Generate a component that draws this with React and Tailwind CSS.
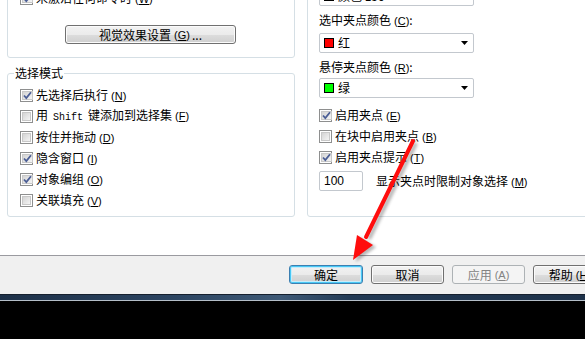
import React from "react";

// Win7 style checkbox
function Check({ checked }) {
  return (
    <span className="w-[13px] h-[13px] shrink-0 border border-[#8e8f8f] bg-white p-[1px] flex">
      <span className="flex-1 border border-[#c8c8c8] bg-[linear-gradient(135deg,#d4d4d4,#f4f4f4)] flex items-center justify-center">
        {checked && (
          <svg width="9" height="9" viewBox="0 0 9 9">
            <path d="M1 4.5 L3.3 7 L8 1.2" fill="none" stroke="#4b5e95" strokeWidth="1.8" />
          </svg>
        )}
      </span>
    </span>
  );
}

// mnemonic like (N)
function Mn({ k }) {
  return (
    <span className="ml-[3px] font-['Liberation_Sans',sans-serif] text-[11px]">
      (<u>{k}</u>)
    </span>
  );
}

function Row({ checked, children, k }) {
  return (
    <div className="h-[21px] flex items-center gap-[3px]">
      <Check checked={checked} />
      <span className="flex items-baseline whitespace-nowrap">
        {children}
        {k && <Mn k={k} />}
      </span>
    </div>
  );
}

function Combo({ color, label }) {
  return (
    <div className="w-[155px] h-[20px] border border-[#c3c8ce] rounded-[2px] bg-white flex items-center pl-[4px] pr-[4px]">
      <span className="w-[10px] h-[10px] border border-black" style={{ background: color }} />
      <span className="ml-[4px] flex-1">{label}</span>
      <svg width="8" height="5" viewBox="0 0 8 5">
        <path d="M0 0 H7 L3.5 4 Z" fill="#000" />
      </svg>
    </div>
  );
}

function Btn({ children, kind = "normal", className = "" }) {
  const styles = {
    normal:
      "border-[#707070] bg-[linear-gradient(#f2f2f2_0%,#ebebeb_50%,#dddddd_51%,#cfcfcf_100%)] shadow-[inset_0_0_0_1px_#fbfbfb] text-black",
    focus:
      "border-[#3c7fb1] bg-[linear-gradient(#f2f2f2_0%,#ebebeb_50%,#dddddd_51%,#cfcfcf_100%)] shadow-[inset_0_0_0_1px_#48c8f5,inset_0_0_0_2px_#c5ecfb] text-black",
    disabled: "border-[#adb2b5] bg-[#f4f4f4] text-[#838383]",
  };
  return (
    <div
      className={`h-[19px] border rounded-[3px] flex items-center justify-center shrink-0 ${styles[kind]} ${className}`}
    >
      {children}
    </div>
  );
}

export default function App() {
  return (
    <div className="w-[585px] h-[339px] bg-white overflow-hidden relative font-['Noto_Sans_CJK_SC','Noto_Sans',sans-serif] text-[12px] leading-[16px] text-black">
      {/* main options */}
      <div className="h-[255px] flex pl-[7px] overflow-hidden">
        {/* left column */}
        <div className="w-[288px] flex flex-col shrink-0">
          <div className="mt-[-62px] h-[120px] shrink-0 border border-[#d5dfe5] rounded-[3px] flex flex-col justify-end items-start pl-[12px] pb-[13px]">
            <div className="h-[16px] flex items-center gap-[3px]">
              <Check checked />
              <span className="whitespace-nowrap">
                未激活任何命令时<Mn k="W" />
              </span>
            </div>
            <Btn className="mt-[19px] ml-[45px] w-[171px]">
              视觉效果设置<Mn k="G" />
              <span className="ml-[2px]">...</span>
            </Btn>
          </div>

          <fieldset className="mt-[7px] border border-[#d5dfe5] rounded-[3px] p-0 m-0 min-w-0">
            <legend className="ml-[6px] px-[1px] leading-[16px]">选择模式</legend>
            <div className="pl-[12px] pt-[4px] pb-[5px]">
              <Row checked k="N">先选择后执行</Row>
              <Row k="F">
                用<span className="mx-[5px] font-['Liberation_Mono',monospace] text-[10px]">Shift</span>键添加到选择集
              </Row>
              <Row k="D">按住并拖动</Row>
              <Row checked k="I">隐含窗口</Row>
              <Row checked k="O">对象编组</Row>
              <Row k="V">关联填充</Row>
            </div>
          </fieldset>
        </div>

        {/* right column */}
        <div className="ml-[12px] w-[300px] shrink-0">
          <div className="mt-[-40px] h-[257px] border border-[#d5dfe5] rounded-[3px] pl-[11px] pt-[25px] flex flex-col">
            <Combo color="#0000ff" label="颜色 150" />
            <div className="mt-[6px] h-[16px] flex items-baseline">
              选中夹点颜色<Mn k="C" />:
            </div>
            <div className="mt-[5px]">
              <Combo color="#ff0000" label="红" />
            </div>
            <div className="mt-[6px] h-[16px] flex items-baseline">
              悬停夹点颜色<Mn k="R" />:
            </div>
            <div className="mt-[3px]">
              <Combo color="#00ff00" label="绿" />
            </div>
            <div className="mt-[7px]">
              <Row checked k="E">启用夹点</Row>
              <Row k="B">在块中启用夹点</Row>
              <Row checked k="T">启用夹点提示</Row>
            </div>
            <div className="mt-[3px] flex items-center">
              <div className="w-[44px] h-[20px] border border-[#c3c8ce] rounded-[2px] pl-[4px] pt-[1px] font-['Liberation_Sans',sans-serif] text-[12px]">
                100
              </div>
              <span className="ml-[13px] whitespace-nowrap flex items-baseline">
                显示夹点时限制对象选择<Mn k="M" />
              </span>
            </div>
          </div>
        </div>
      </div>

      {/* dialog button bar */}
      <div className="h-[1px] bg-[#9a9aa0]" />
      <div className="h-[38px] bg-[#f0f0f0] flex items-start pt-[9px] pl-[289px] gap-[8px]">
        <Btn kind="focus" className="w-[74px]">确定</Btn>
        <Btn className="w-[73px]">取消</Btn>
        <Btn kind="disabled" className="w-[73px]">
          应用<Mn k="A" />
        </Btn>
        <Btn className="w-[74px]">
          帮助<Mn k="H" />
        </Btn>
      </div>
      <div className="h-[1px] bg-[#16202e]" />
      <div className="h-[5px] bg-[linear-gradient(90deg,#1d3048,#2c4562_30%,#3e5976_48%,#233a55_60%,#1e324a)]" />
      <div className="h-[1px] bg-[#b4bec8]" />
      <div className="bg-black h-[50px]" />

      {/* red annotation arrow */}
      <svg className="absolute inset-0 pointer-events-none" width="585" height="339" viewBox="0 0 585 339">
        <defs>
          <filter id="sh" x="-20%" y="-20%" width="140%" height="140%">
            <feGaussianBlur stdDeviation="1.5" />
          </filter>
        </defs>
        <g filter="url(#sh)" opacity="0.35" transform="translate(3,2)">
          <line x1="413" y1="141" x2="366" y2="237" stroke="#333" strokeWidth="4" />
          <polygon points="353,260 357,235 373,245" fill="#333" />
        </g>
        <line x1="413" y1="141" x2="366" y2="237" stroke="#ff0d0d" strokeWidth="4" strokeLinecap="round" />
        <polygon points="353,260 357,235 373,245" fill="#ff0d0d" />
      </svg>
    </div>
  );
}
